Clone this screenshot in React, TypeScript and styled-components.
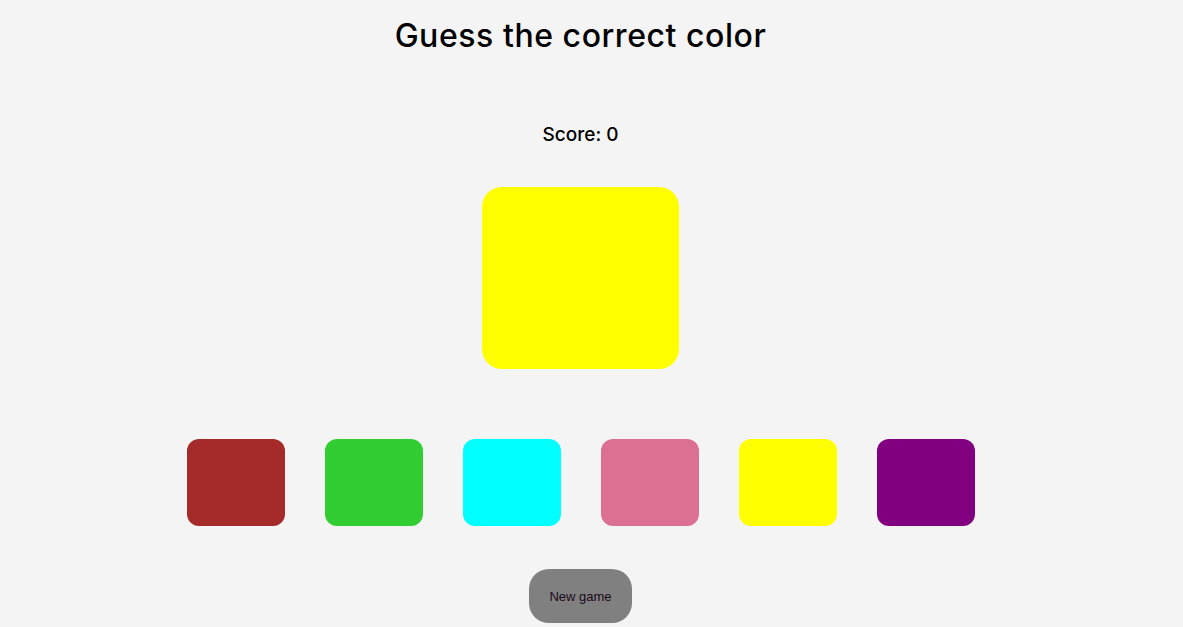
import React from "react";
import styled, { createGlobalStyle } from "styled-components";

const Global = createGlobalStyle`
  html, body { margin: 0; padding: 0; background: #f4f4f4; }
  body { font-family: Inter, "Noto Sans", sans-serif; color: #000; }
`;

const Page = styled.main`
  width: 1161px;
  display: flex;
  flex-direction: column;
  align-items: center;
`;

const Title = styled.h1`
  margin: 16px 0 0;
  font-size: 32px;
  line-height: 40px;
  font-weight: 500;
  letter-spacing: 0.55px;
`;

const Score = styled.p`
  margin: 67px 0 0;
  font-size: 19px;
  line-height: 24px;
  font-weight: 500;
`;

const Target = styled.div<{ $color: string }>`
  margin-top: 40px;
  width: 197px;
  height: 182px;
  border-radius: 20px;
  background: ${(p) => p.$color};
`;

const Options = styled.div`
  margin-top: 70px;
  display: flex;
  gap: 40px;
`;

const Option = styled.button<{ $color: string }>`
  width: 98px;
  height: 87px;
  border: none;
  padding: 0;
  border-radius: 12px;
  background: ${(p) => p.$color};
  cursor: pointer;
`;

const NewGame = styled.button`
  margin-top: 43px;
  width: 103px;
  height: 54px;
  border: none;
  border-radius: 20px;
  background: #808080;
  color: #1a0a1a;
  font-family: Arial, "Liberation Sans", sans-serif;
  font-size: 13px;
  cursor: pointer;
`;

const colors = ["#a52a2a", "#32cd32", "#00ffff", "#db7093", "#ffff00", "#800080"];

export default function App() {
  return (
    <>
      <Global />
      <Page>
        <Title>Guess the correct color</Title>
        <Score>Score: 0</Score>
        <Target $color="#ffff00" />
        <Options>
          {colors.map((c) => (
            <Option key={c} $color={c} aria-label={c} />
          ))}
        </Options>
        <NewGame>New game</NewGame>
      </Page>
    </>
  );
}
